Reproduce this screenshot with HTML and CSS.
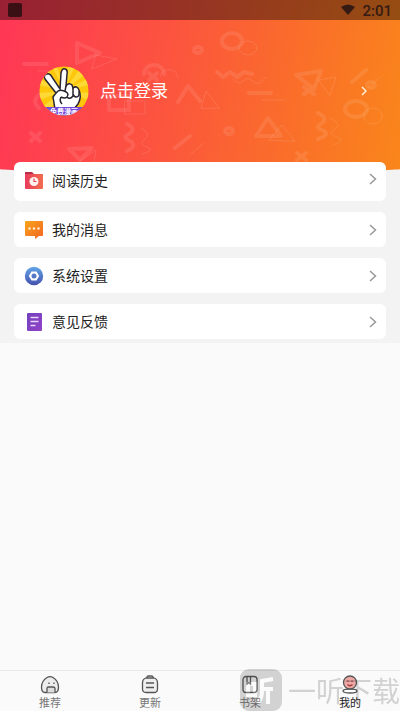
FILE: index.html
```html
<!DOCTYPE html>
<html lang="zh-CN">
<head>
<meta charset="utf-8">
<meta name="viewport" content="width=device-width, initial-scale=1">
<title>我的</title>
<link rel="stylesheet" href="styles.css">
</head>
<body>
<main class="page">
  <header class="hero">
    <svg class="pattern" viewBox="0 20 400 152" preserveAspectRatio="xMidYMin slice" aria-hidden="true">
      <g class="thick">
        <path d="M24 64H47M249 93H271M352 82L366 70M175 148L190 136"/>
        <path d="M77 43L100 53L77 63ZM296 75L321 71L314 89ZM256 136L268 118L281 136ZM69 149L92 148L80 160ZM178 102L188 86L200 101"/>
        <path d="M144 74A10 9 0 0 1 164 74"/>
        <ellipse cx="232" cy="41" rx="10" ry="8"/><ellipse cx="356" cy="109" rx="11" ry="8"/>
        <ellipse cx="229" cy="131" rx="4" ry="3"/><ellipse cx="371" cy="85" rx="4" ry="3"/><ellipse cx="198" cy="50" rx="4" ry="3"/>
        <path d="M217 72L223 77L230 72L237 77L244 72L252 74M318 113Q329 118 321 124Q314 127 324 131Q330 135 318 139M127 124Q137 129 129 134Q121 137 132 142Q136 147 127 151"/>
        <path d="M304 87L314 94M314 87L304 94M297 153L306 160M306 153L297 160M31 133L40 141M40 133L31 141M149 73L157 80M157 73L149 80"/>
        <path d="M109 96H129V110H109ZM40 94Q31 101 39 108"/>
      </g>
      <g class="thin">
        <path d="M38 71H63M262 100H285M368 88L380 77M191 154L204 143"/>
        <path d="M96 55L117 59L92 69ZM319 80L336 77L330 95ZM269 140L282 125L295 141ZM201 108L206 91L219 108ZM80 161L96 150L94 162"/>
        <path d="M160 77A8 7 0 0 1 178 78"/>
        <ellipse cx="248" cy="48" rx="9" ry="7"/><ellipse cx="373" cy="116" rx="9" ry="8"/>
        <path d="M233 79Q238 86 243 81T253 81T262 81T267 78M330 118Q343 124 335 129T337 137T334 145M141 128Q152 134 145 139T147 147T142 154"/>
        <path d="M125 101H145V114H125Z"/>
      </g>
    </svg>
    <div class="status">
      <span class="notice"></span>
      <svg class="wifi" viewBox="0 0 16 12" aria-hidden="true"><path d="M1 3Q8-2 15 3L8 11Z"/></svg>
      <time>2:01</time>
    </div>
    <a class="login" href="#login">
      <svg class="avatar" viewBox="0 0 50 50" aria-hidden="true">
        <defs><clipPath id="face"><circle cx="25" cy="25" r="24.500"/></clipPath></defs>
        <g clip-path="url(#face)">
          <path fill="#fdc70b" d="M0 0H50V50H0Z"/>
          <path fill="#fed936" d="M25 25L0 5V0H6ZM25 25L13 0H18ZM25 25L29 0H36ZM25 25L43 0H50V5ZM25 25L50 12V19ZM25 25L50 27V34ZM25 25L0 13V19ZM25 25L0 27V34ZM25 25L0 43V50H5Z"/>
          <path class="hand" d="M16 43L14 31L17 27L6 13Q4 9 8 8Q11 7 13 11L21 23L22 7Q23 2 26 3Q29 4 28 8L27 20Q30 16 33 19L34 22Q38 19 40 24Q43 31 39 38L35 43Z"/>
          <path class="crease" d="M17 27Q20 23 25 25Q31 27 28 31Q26 33 22 31M22 31Q20 35 23 38M27 20L26 25M34 22L34 30Q31 34 28 31M40 25Q41 31 37 31Q35 31 34 28"/>
          <path fill="#7447d8" d="M0 41H50V50H0Z"/>
          <text x="25" y="48" text-anchor="middle">免费漫画</text>
        </g>
      </svg>
      <span>点击登录</span>
      <svg class="login-arrow" viewBox="0 0 6 10" aria-hidden="true"><path d="M1 1L5 5L1 9"/></svg>
    </a>
  </header>
  <nav class="menu" aria-label="个人中心">
    <a href="#history">
      <svg class="icon" viewBox="0 0 20 20" aria-hidden="true">
        <defs><linearGradient id="red"><stop stop-color="#e83c5c"/><stop offset="1" stop-color="#f26d50"/></linearGradient></defs>
        <path fill="#b92d48" d="M1 1H8L10 3H19V8H1Z"/><path fill="url(#red)" d="M1 3H19V17Q19 18 18 18H2Q1 18 1 17Z"/>
        <circle cx="10" cy="10.500" r="4.500" fill="#fff1ef"/><path d="M10 7.500V10.500H12.500" fill="none" stroke="#e7455a" stroke-width="1.200"/>
      </svg>
      <span>阅读历史</span>
      <svg class="arrow" viewBox="0 0 8 12" aria-hidden="true"><path d="M1 1L6.500 6L1 11"/></svg>
    </a>
    <a href="#messages">
      <svg class="icon" viewBox="0 0 20 20" aria-hidden="true">
        <defs><linearGradient id="orange" x2="1" y2="1"><stop stop-color="#f9a51c"/><stop offset="1" stop-color="#f26422"/></linearGradient></defs>
        <path fill="url(#orange)" d="M2 1H18Q19 1 19 2V15Q19 16 18 16H15L11 19V16H2Q1 16 1 15V2Q1 1 2 1Z"/>
        <g fill="#fff0d7"><circle cx="5.500" cy="8.500" r="1.200"/><circle cx="10" cy="8.500" r="1.200"/><circle cx="14.500" cy="8.500" r="1.200"/></g>
      </svg>
      <span>我的消息</span>
      <svg class="arrow" viewBox="0 0 8 12" aria-hidden="true"><path d="M1 1L6.500 6L1 11"/></svg>
    </a>
    <a href="#settings">
      <svg class="icon" viewBox="0 0 20 20" aria-hidden="true">
        <defs><linearGradient id="blue" x2="0" y2="1"><stop stop-color="#61a5e6"/><stop offset="1" stop-color="#4551ae"/></linearGradient></defs>
        <circle cx="10" cy="10" r="9.200" fill="url(#blue)"/><path fill="#fff" d="M7.500 5.500H12.500L15.200 10L12.500 14.500H7.500L4.800 10Z"/><circle cx="10" cy="10" r="2.500" fill="#5679c6"/>
      </svg>
      <span>系统设置</span>
      <svg class="arrow" viewBox="0 0 8 12" aria-hidden="true"><path d="M1 1L6.500 6L1 11"/></svg>
    </a>
    <a href="#feedback">
      <svg class="icon" viewBox="0 0 20 20" aria-hidden="true">
        <defs><linearGradient id="purple" x2="1" y2="1"><stop stop-color="#7242bd"/><stop offset="1" stop-color="#9242c8"/></linearGradient></defs>
        <rect x="3" y="1" width="15" height="18" rx="1" fill="url(#purple)"/><path d="M6.500 5.500H14.500M6.500 9.500H14.500M6.500 13.500H11.500" stroke="#e9d5f6" stroke-width="1.500"/>
      </svg>
      <span>意见反馈</span>
      <svg class="arrow" viewBox="0 0 8 12" aria-hidden="true"><path d="M1 1L6.500 6L1 11"/></svg>
    </a>
  </nav>
</main>
<nav class="tabs" aria-label="主导航">
  <a href="#recommend">
    <svg viewBox="0 0 20 20" aria-hidden="true"><path fill="#ececec" d="M7 2.500Q10 .8 13 2.500Q18.500 6 18.500 12Q18.500 17.500 15 17.500H5Q1.500 17.500 1.500 12Q1.500 6 7 2.500Z"/><path fill="#ddd" d="M7 17.500V13.500Q7 12 8.500 12H13Q15 12 15 13.500V17.500"/><path d="M9 7.500V9M14 7.500V9"/></svg>
    <span>推荐</span>
  </a>
  <a href="#updates">
    <svg viewBox="0 0 20 20" aria-hidden="true"><path d="M7 3V2Q7 1 8.500 1H11.500Q13 1 13 2V3"/><path fill="#eee" d="M6 3H14Q17.500 4 17.500 8V14Q17.500 17.500 14 17.500H6Q2.500 17.500 2.500 14V8Q2.500 4 6 3Z"/><path d="M6 8H14M6 12.500H14"/></svg>
    <span>更新</span>
  </a>
  <a href="#shelf">
    <svg viewBox="0 0 20 20" aria-hidden="true"><rect x="3" y="1.500" width="14" height="16" rx="3"/><path d="M7 1.500V9L8.800 7.500L10.500 9V1.500"/></svg>
    <span>书架</span>
  </a>
  <a class="active" href="#mine" aria-current="page">
    <svg viewBox="0 0 20 20" aria-hidden="true"><ellipse cx="10" cy="16" rx="7" ry="2" fill="#fff"/><circle cx="10" cy="7.500" r="6.500" fill="#eda8a5"/><path d="M8 5.500V7M12 5.500V7M7.500 9.500Q10 12 12.500 9.500" stroke="#a9383a"/></svg>
    <span>我的</span>
  </a>
</nav>
<div class="watermark" aria-hidden="true">
  <svg viewBox="0 0 42 42"><rect width="42" height="42" rx="9"/><path d="M8 15H15V26H8ZM33 10L22 12V22Q22 29 18 34M22 20H33M28 20V35"/></svg>
  <span>一听下载</span>
</div>
</body>
</html>
```

FILE: styles.css
```css
* { box-sizing: border-box; }
body {
  margin: 0;
  min-height: 100vh;
  display: flex;
  flex-direction: column;
  background: #fafafa;
  color: #222;
  font-family: "Noto Sans CJK SC", sans-serif;
  overflow-x: hidden;
}
a { color: inherit; text-decoration: none; }
svg { display: block; flex: none; }
.page { background: #f3f3f3; padding-bottom: 4px; }
.hero {
  position: relative;
  height: 172px;
  overflow: hidden;
  background: linear-gradient(100deg, #ff3656 0%, #fc5340 40%, #fa6c2b 70%, #fa861b 100%);
  border-radius: 0 0 50% 50% / 0 0 3px 3px;
}
.pattern { position: absolute; top: 20px; left: 0; width: 100%; height: 152px; fill: none; stroke: #fff; stroke-linejoin: round; stroke-linecap: round; }
.thick { stroke-width: 4px; opacity: .09; }
.thin { stroke-width: 1px; opacity: .11; }
.status {
  position: relative;
  display: flex;
  align-items: center;
  height: 20px;
  padding: 0 8px;
  background: rgba(0, 0, 0, .4);
  color: #351b13;
  font: 500 15px/20px Roboto, sans-serif;
}
.notice { width: 14px; height: 14px; border-radius: 2px; background: #3a1014; }
.wifi { width: 16px; height: 12px; margin: 0 6px 0 auto; fill: #351b13; }
time { padding-top: 2px; }
.login {
  position: relative;
  display: flex;
  align-items: center;
  gap: 11px;
  margin-top: 46px;
  padding: 0 33px 0 39px;
  color: #fff;
  font-size: 17px;
  line-height: 24px;
}
.login span { padding-bottom: 2px; }
.avatar { width: 50px; height: 50px; }
.avatar text { fill: #fff; font-size: 7px; font-weight: 700; }
.hand { fill: #fff; stroke: #292431; stroke-width: 1.5px; }
.crease { fill: none; stroke: #292431; stroke-width: 1.5px; }
.login-arrow { width: 6px; height: 10px; margin-left: auto; fill: none; stroke: #fff0d8; stroke-width: 1.5px; }
.menu { position: relative; display: grid; gap: 11px; margin: -10px 14px 0; }
.menu a {
  display: flex;
  align-items: center;
  gap: 8px;
  height: 36px;
  padding: 0 9px 0 10px;
  border-radius: 6px;
  background: #fff;
  font-size: 14px;
  line-height: 20px;
}
.menu a { height: 35px; }
.menu a:first-child { height: 39px; padding-bottom: 2px; }
.menu span { padding-bottom: 2px; }
.icon { width: 20px; height: 20px; }
.arrow { width: 8px; height: 12px; margin-left: auto; fill: none; stroke: #999; stroke-width: 1.5px; }
.menu a:first-child .arrow { align-self: flex-start; margin-top: 11px; }
.tabs { display: flex; margin-top: auto; height: 41px; border-top: 1px solid #e8e8e8; }
.tabs a {
  flex: 1;
  display: flex;
  flex-direction: column;
  align-items: center;
  padding-top: 4px;
  color: #777;
  font-size: 11px;
  line-height: 14px;
}
.tabs svg { width: 20px; height: 20px; fill: none; stroke: #555; stroke-width: 1.3px; }
.tabs .active { color: #222; }
.watermark {
  position: fixed;
  right: 0;
  bottom: 0;
  display: flex;
  align-items: center;
  gap: 6px;
  opacity: .2;
  color: #333;
  font-size: 28px;
  line-height: 42px;
  pointer-events: none;
}
.watermark svg { width: 42px; height: 42px; fill: #333; }
.watermark path { fill: none; stroke: #fff; stroke-width: 4px; }
```
